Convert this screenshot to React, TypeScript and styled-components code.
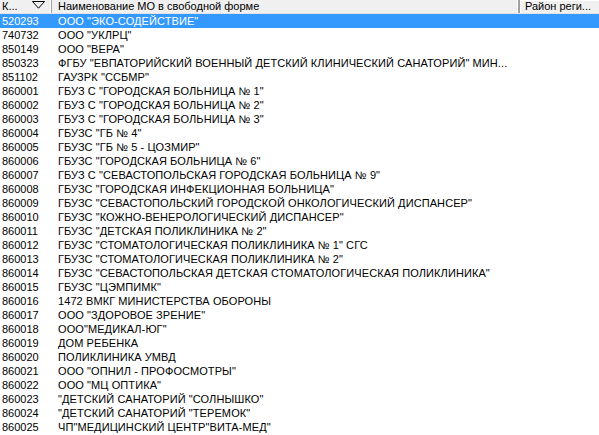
import React from "react";
import styled, { createGlobalStyle } from "styled-components";

const GlobalStyle = createGlobalStyle`
  html, body { margin: 0; padding: 0; background: #ffffff; }
  body { font-family: "Liberation Sans", Arial, sans-serif; font-size: 11px; }
`;

const Grid = styled.div`
  width: 599px;
  height: 435px;
  overflow: hidden;
  background: #ffffff;
  color: #000000;
  font-family: "Liberation Sans", Arial, sans-serif;
  font-size: 11px;
`;

const HeaderRow = styled.div`
  display: flex;
  height: 13px;
  background: #f0f0f0;
  border-bottom: 1px solid #e3e3e3;
  box-sizing: content-box;
`;

const HeaderCell = styled.div<{ $w: number; $raised?: boolean }>`
  flex: 0 0 ${(p) => p.$w}px;
  width: ${(p) => p.$w}px;
  box-sizing: border-box;
  display: flex;
  align-items: center;
  justify-content: space-between;
  height: 13px;
  line-height: 13px;
  padding-left: ${(p) => (p.$raised ? 5 : 2)}px;
  padding-right: 6px;
  white-space: nowrap;
  overflow: hidden;
  border-right: 1px solid #a0a0a0;
  box-shadow: inset -1px 0 0 #ffffff;
  ${(p) =>
    p.$raised
      ? `border-left: 1px solid #a0a0a0; box-shadow: inset 1px 1px 0 #ffffff, inset -1px 0 0 #d0d0d0;`
      : ``}
`;

const HeaderLabel = styled.span<{ $indent?: number }>`
  padding-left: ${(p) => p.$indent ?? 0}px;
`;

const SortIcon = styled.svg`
  flex: 0 0 auto;
  display: block;
  margin-top: -3px;
`;

const Body = styled.div`
  display: flex;
  flex-direction: column;
`;

const Row = styled.div<{ $selected?: boolean }>`
  display: flex;
  height: 14px;
  line-height: 14px;
  background: ${(p) => (p.$selected ? "#3399ff" : "transparent")};
  color: ${(p) => (p.$selected ? "#ffffff" : "#000000")};
  white-space: nowrap;
`;

const CodeCell = styled.div`
  flex: 0 0 53px;
  box-sizing: border-box;
  padding-left: 2px;
  overflow: hidden;
`;

const NameCell = styled.div`
  flex: 1 1 auto;
  box-sizing: border-box;
  padding-left: 5px;
  letter-spacing: 0.09px;
  overflow: hidden;
`;

const rows: [string, string][] = [
  ["520293", 'ООО "ЭКО-СОДЕЙСТВИЕ"'],
  ["740732", 'ООО "УКЛРЦ"'],
  ["850149", 'ООО "ВЕРА"'],
  ["850323", 'ФГБУ "ЕВПАТОРИЙСКИЙ ВОЕННЫЙ ДЕТСКИЙ КЛИНИЧЕСКИЙ САНАТОРИЙ" МИН...'],
  ["851102", 'ГАУЗРК "ССБМР"'],
  ["860001", 'ГБУЗ С "ГОРОДСКАЯ БОЛЬНИЦА № 1"'],
  ["860002", 'ГБУЗ С "ГОРОДСКАЯ БОЛЬНИЦА № 2"'],
  ["860003", 'ГБУЗ С "ГОРОДСКАЯ БОЛЬНИЦА № 3"'],
  ["860004", 'ГБУЗС "ГБ № 4"'],
  ["860005", 'ГБУЗС "ГБ № 5 - ЦОЗМИР"'],
  ["860006", 'ГБУЗС "ГОРОДСКАЯ БОЛЬНИЦА № 6"'],
  ["860007", 'ГБУЗ С "СЕВАСТОПОЛЬСКАЯ ГОРОДСКАЯ БОЛЬНИЦА № 9"'],
  ["860008", 'ГБУЗС "ГОРОДСКАЯ ИНФЕКЦИОННАЯ БОЛЬНИЦА"'],
  ["860009", 'ГБУЗС "СЕВАСТОПОЛЬСКИЙ ГОРОДСКОЙ ОНКОЛОГИЧЕСКИЙ ДИСПАНСЕР"'],
  ["860010", 'ГБУЗС "КОЖНО-ВЕНЕРОЛОГИЧЕСКИЙ ДИСПАНСЕР"'],
  ["860011", 'ГБУЗС "ДЕТСКАЯ ПОЛИКЛИНИКА № 2"'],
  ["860012", 'ГБУЗС "СТОМАТОЛОГИЧЕСКАЯ ПОЛИКЛИНИКА № 1" СГС'],
  ["860013", 'ГБУЗС "СТОМАТОЛОГИЧЕСКАЯ ПОЛИКЛИНИКА № 2"'],
  ["860014", 'ГБУЗС "СЕВАСТОПОЛЬСКАЯ ДЕТСКАЯ СТОМАТОЛОГИЧЕСКАЯ ПОЛИКЛИНИКА"'],
  ["860015", 'ГБУЗС "ЦЭМПИМК"'],
  ["860016", "1472 ВМКГ МИНИСТЕРСТВА ОБОРОНЫ"],
  ["860017", 'ООО "ЗДОРОВОЕ ЗРЕНИЕ"'],
  ["860018", 'ООО"МЕДИКАЛ-ЮГ"'],
  ["860019", "ДОМ РЕБЕНКА"],
  ["860020", "ПОЛИКЛИНИКА УМВД"],
  ["860021", 'ООО "ОПНИЛ - ПРОФОСМОТРЫ"'],
  ["860022", 'ООО "МЦ ОПТИКА"'],
  ["860023", '"ДЕТСКИЙ САНАТОРИЙ "СОЛНЫШКО"'],
  ["860024", '"ДЕТСКИЙ САНАТОРИЙ "ТЕРЕМОК"'],
  ["860025", 'ЧП"МЕДИЦИНСКИЙ ЦЕНТР"ВИТА-МЕД"'],
];

export default function App() {
  return (
    <>
      <GlobalStyle />
      <Grid>
        <HeaderRow>
          <HeaderCell $w={52}>
            <HeaderLabel>К...</HeaderLabel>
            <SortIcon width="13" height="8" viewBox="0 0 13 8">
              <path d="M0.5 0.5 L12.5 0.5 L6.5 7.2 Z" fill="none" stroke="#000" strokeWidth="1" />
            </SortIcon>
          </HeaderCell>
          <HeaderCell $w={467}>
            <HeaderLabel $indent={4}>Наименование МО в свободной форме</HeaderLabel>
          </HeaderCell>
          <HeaderCell $w={100} $raised>
            <HeaderLabel>Район реги...</HeaderLabel>
          </HeaderCell>
        </HeaderRow>
        <Body>
          {rows.map(([code, name], i) => (
            <Row key={code} $selected={i === 0}>
              <CodeCell>{code}</CodeCell>
              <NameCell>{name}</NameCell>
            </Row>
          ))}
        </Body>
      </Grid>
    </>
  );
}
